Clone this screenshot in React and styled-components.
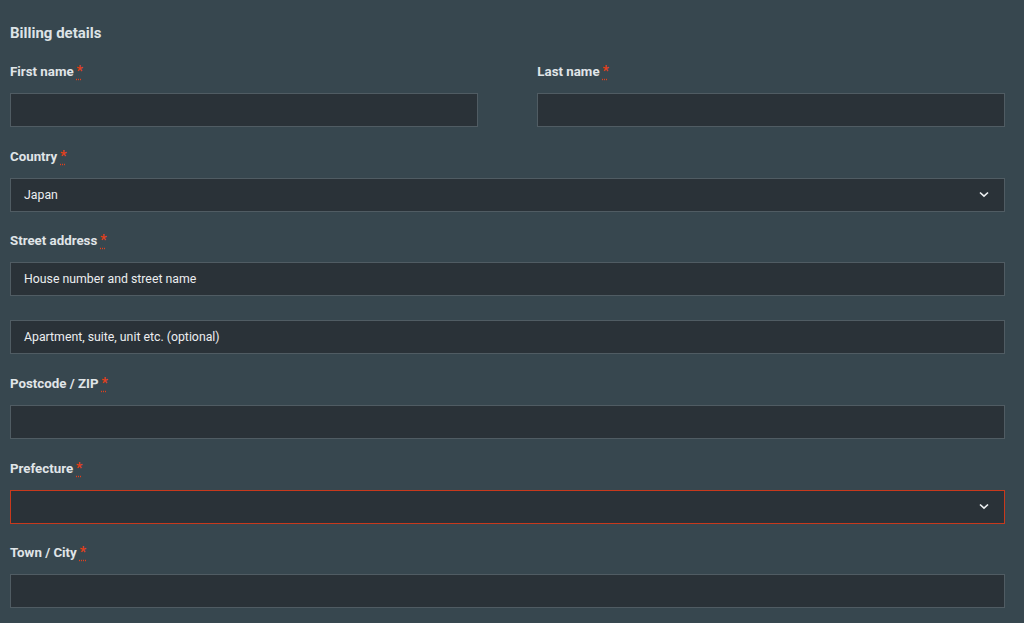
import React from "react";
import styled, { createGlobalStyle } from "styled-components";

const Global = createGlobalStyle`
  html, body { margin: 0; padding: 0; background: #37474f; }
  body { font-family: Roboto, "Liberation Sans", Arial, sans-serif; }
  * { box-sizing: border-box; }
`;

const Page = styled.div`
  padding: 23px 19px 0 10px;
  background: #37474f;
  min-height: 623px;
`;

const Heading = styled.h3`
  margin: 0 0 18px;
  font-size: 15px;
  line-height: 20px;
  font-weight: 700;
  color: #dde3e6;
`;

const Grid = styled.div`
  display: flex;
  flex-wrap: wrap;
  justify-content: space-between;
`;

const Row = styled.div`
  width: ${(p) => (p.$half ? "47%" : "100%")};
  margin-bottom: 18.65px;
  display: flex;
  flex-direction: column;
`;

const Label = styled.label`
  display: block;
  font-size: 13.3px;
  line-height: 20px;
  font-weight: 700;
  color: #e0e5e8;
  margin-bottom: 11px;
`;

const Req = styled.abbr`
  color: #e2401c;
  text-decoration: underline dotted;
  text-underline-offset: 3px;
  margin-left: 3px;
  font-size: 14px;
  font-weight: 700;
  cursor: help;
`;

const Field = styled.div`
  position: relative;
  height: 34px;
  background: #2a3238;
  border: 1px solid ${(p) => (p.$invalid ? "#c8391c" : "#505c63")};
  display: flex;
  align-items: center;
  padding: 0 13px;
  font-size: 12.3px;
  color: #eceef0;
  & + & { margin-top: 24px; }
`;

const Value = styled.span`
  flex: 1;
  white-space: nowrap;
`;

const Chevron = styled.svg`
  width: 10px;
  height: 7px;
  margin-right: 2px;
`;

const Arrow = () => (
  <Chevron viewBox="0 0 10 7">
    <path d="M1 1.5 L5 5.2 L9 1.5" fill="none" stroke="#eef0f2" strokeWidth="1.6" />
  </Chevron>
);

const FormRow = ({ label, half, children }) => (
  <Row $half={half}>
    <Label>
      {label}
      <Req title="required">*</Req>
    </Label>
    {children}
  </Row>
);

export default function App() {
  return (
    <>
      <Global />
      <Page>
        <Heading>Billing details</Heading>
        <Grid>
          <FormRow label="First name" half>
            <Field />
          </FormRow>
          <FormRow label="Last name" half>
            <Field />
          </FormRow>
          <FormRow label="Country">
            <Field>
              <Value>Japan</Value>
              <Arrow />
            </Field>
          </FormRow>
          <FormRow label="Street address">
            <Field>
              <Value>House number and street name</Value>
            </Field>
            <Field>
              <Value>Apartment, suite, unit etc. (optional)</Value>
            </Field>
          </FormRow>
          <FormRow label="Postcode / ZIP">
            <Field />
          </FormRow>
          <FormRow label="Prefecture">
            <Field $invalid>
              <Value />
              <Arrow />
            </Field>
          </FormRow>
          <FormRow label="Town / City">
            <Field />
          </FormRow>
        </Grid>
      </Page>
    </>
  );
}
